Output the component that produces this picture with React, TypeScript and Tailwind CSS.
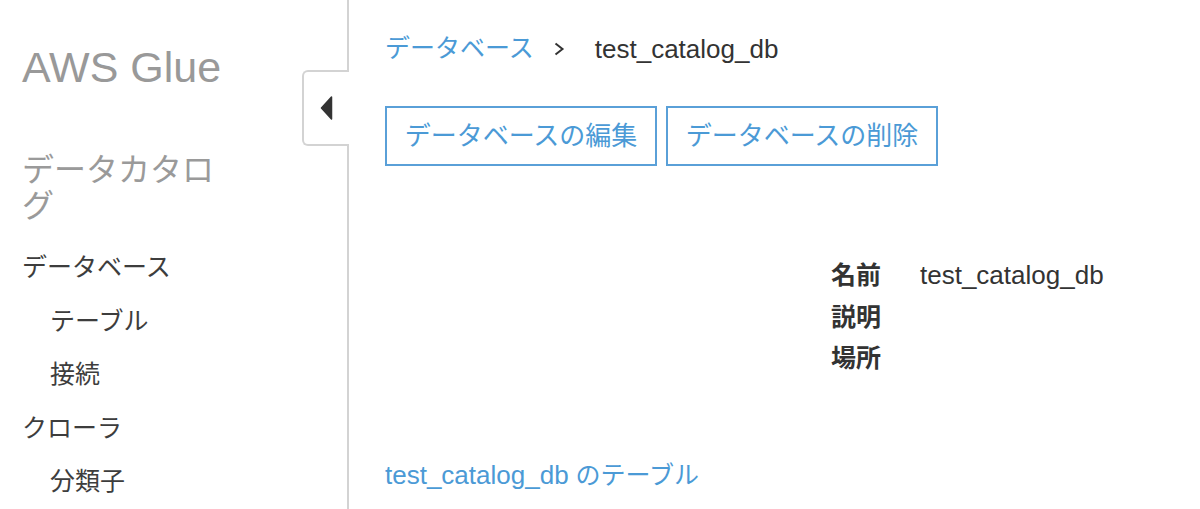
import React from 'react';

const navItems = [
  { label: 'データベース', sub: false },
  { label: 'テーブル', sub: true },
  { label: '接続', sub: true },
  { label: 'クローラ', sub: false },
  { label: '分類子', sub: true },
];

const details = [
  { label: '名前', value: 'test_catalog_db' },
  { label: '説明', value: '' },
  { label: '場所', value: '' },
];

const Sidebar = () => {
  return (
    <aside className="relative w-[349px] shrink-0 h-full border-r-2 border-[#d3d3d3] pl-[22px] pt-[42px]">
      <h1 className="text-[43px] leading-[50px] text-[#999999]">AWS Glue</h1>
      <h2 className="mt-[60px] w-[210px] text-[32px] leading-[36px] text-[#9a9a9a]">データカタログ</h2>
      <ul className="mt-[17px]">
        {navItems.map((item) => (
          <li
            key={item.label}
            className={`text-[25px] leading-[53.5px] text-[#3d3d3d] ${item.sub ? 'pl-[28px]' : ''}`}
          >
            {item.label}
          </li>
        ))}
      </ul>
      <button className="absolute top-[70px] right-[-2px] w-[47px] h-[76px] flex items-center justify-center bg-white border-2 border-r-0 border-[#d3d3d3] rounded-l-[6px]">
        <svg width="13" height="24" viewBox="0 0 13 24">
          <path d="M11.5 1 L1.5 12 L11.5 23 Z" fill="#333" stroke="#333" strokeWidth="1.5" strokeLinejoin="round" />
        </svg>
      </button>
    </aside>
  );
};

const App = () => {
  return (
    <div className="flex h-[509px] w-[1200px] overflow-hidden bg-white font-['Liberation_Sans','Noto_Sans_CJK_JP',sans-serif]">
      <Sidebar />
      <main className="flex-1 pl-[36px] pt-[31px]">
        <nav className="flex items-center h-[36px]">
          <a className="text-[25px] text-[#4b9ad6]">データベース</a>
          <svg className="ml-[19px]" width="12" height="14" viewBox="0 0 12 14">
            <path d="M2.5 1.5 L9.5 7 L2.5 12.5" fill="none" stroke="#333" strokeWidth="2" />
          </svg>
          <span className="ml-[30px] text-[26px] text-[#333]">test_catalog_db</span>
        </nav>

        <div className="mt-[39px] flex gap-[9px]">
          <button className="w-[272px] h-[60px] border-2 border-[#5aa0d8] text-[26px] text-[#4b9ad6]">
            データベースの編集
          </button>
          <button className="w-[272px] h-[60px] border-2 border-[#5aa0d8] text-[26px] text-[#4b9ad6]">
            データベースの削除
          </button>
        </div>

        <div className="mt-[89px] flex">
          <div className="w-[446px] shrink-0" />
          <dl className="grid grid-cols-[89px_auto] leading-[41.5px]">
            {details.map((d) => (
              <React.Fragment key={d.label}>
                <dt className="text-[25px] font-bold text-[#333]">{d.label}</dt>
                <dd className="text-[26px] text-[#333]">{d.value}</dd>
              </React.Fragment>
            ))}
          </dl>
        </div>

        <a className="mt-[77px] block h-[36px] leading-[36px] text-[#4b9ad6]">
          <span className="text-[26px]">test_catalog_db</span>
          <span className="text-[25px]"> のテーブル</span>
        </a>
      </main>
    </div>
  );
};

export default App;
